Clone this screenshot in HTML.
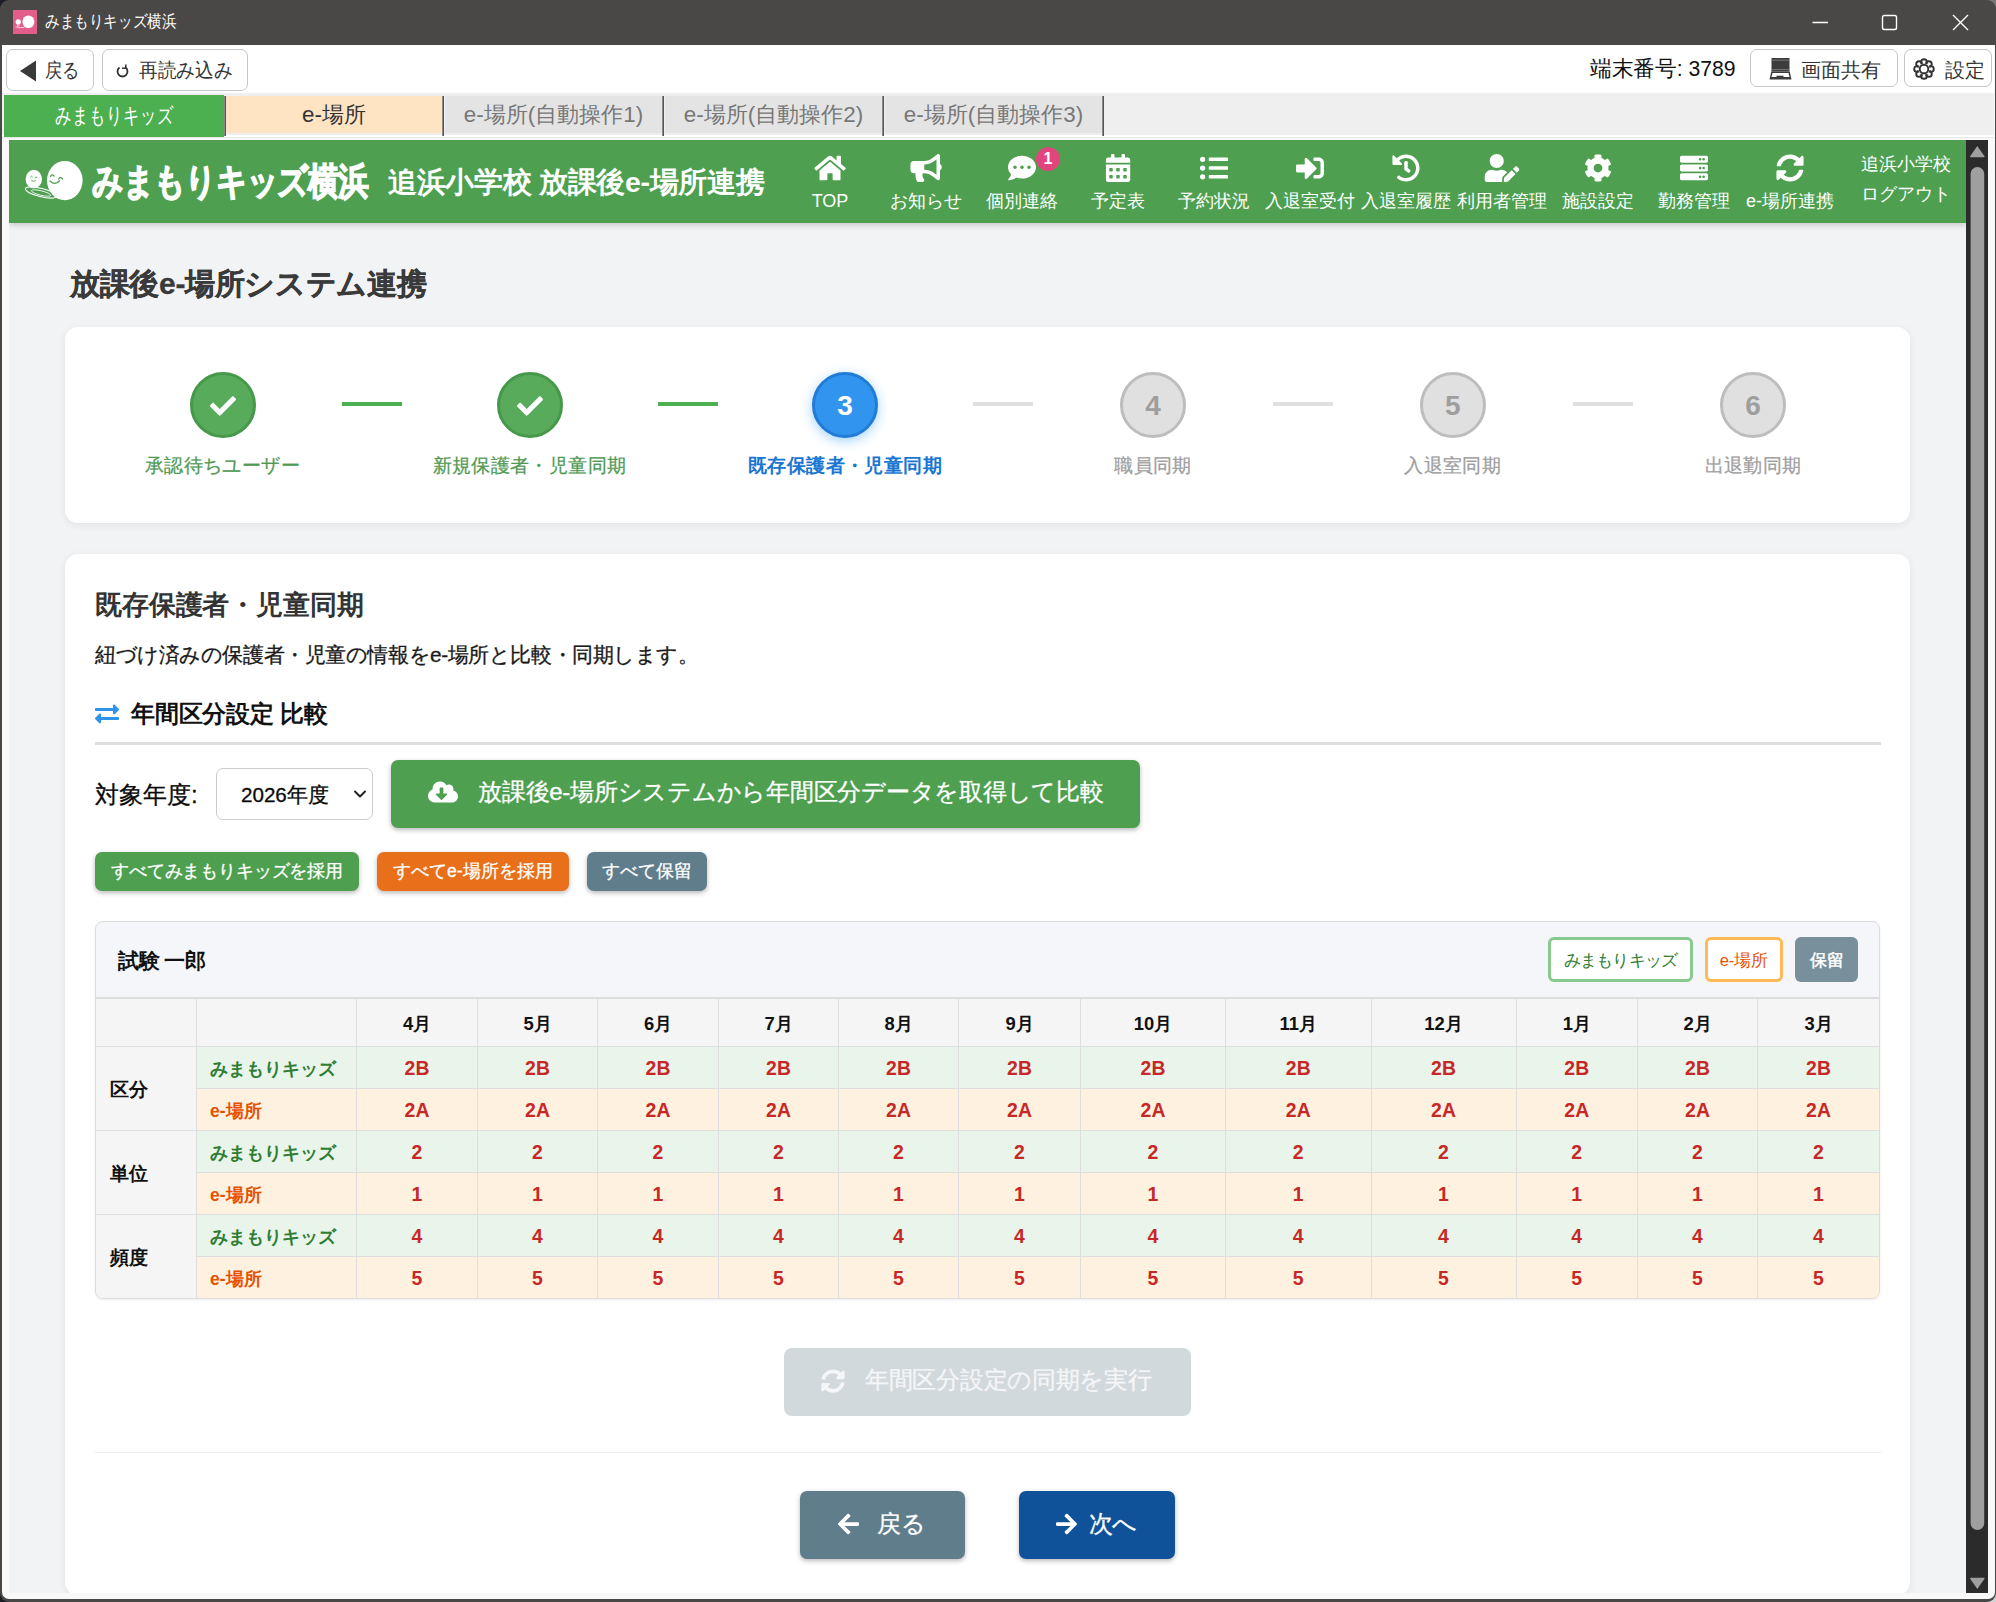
<!DOCTYPE html>
<html lang="ja">
<head>
<meta charset="utf-8">
<title>みまもりキッズ横浜</title>
<style>
*{box-sizing:border-box;margin:0;padding:0}
html,body{width:1996px;height:1602px;overflow:hidden;background:#1c1e26;font-family:"Liberation Sans",sans-serif;}
.abs{position:absolute}
.c{display:flex;align-items:center;justify-content:center;white-space:nowrap}
svg{display:block}
#win{position:absolute;left:0;top:0;width:1996px;height:1602px;background:#4a4846;border-radius:9px;overflow:hidden}
#client{position:absolute;left:2px;top:45px;width:1992.6px;height:1554px;background:#f9f9f9;border-radius:0 0 7px 7px;overflow:hidden}
#cl{position:absolute;left:-2px;top:-45px;width:1996px;height:1602px}
/* title bar */
#ticon{left:13px;top:10px;width:24px;height:24px;background:#e35d8a}
#ttext{left:45px;top:0;height:45px;line-height:44px;color:#fff;font-size:17px;white-space:nowrap;transform:scaleX(.86);transform-origin:0 50%}
/* toolbar */
#toolbar{left:2px;top:45px;width:1992px;height:48px;background:#fff}
.tbtn{position:absolute;border:1px solid #c6c6c6;border-radius:7px;background:#fff}
.tx{height:30px;line-height:30px;color:#333;white-space:nowrap;transform-origin:0 50%}
#tabstrip{left:2px;top:93px;width:1992px;height:42px;background:#efefef}
.tab{position:absolute;top:96px;height:37px;font-size:22.400px;color:#777;background:#e4e4e4}
.sep{position:absolute;top:96px;width:2px;height:39.600px;background:linear-gradient(90deg,#8a8a8a 0,#8a8a8a 40%,#555 40%)}
/* web view */
#web{left:9px;top:140px;width:1957px;height:1453px;background:#f2f3f5;overflow:hidden}
#pg{position:absolute;left:-9px;top:-140px;width:1996px;height:1602px}
#sbar{left:1966px;top:140px;width:22px;height:1453px;background:#2b2b2b}
</style>
</head>
<body>
<div class="abs" style="right:0;top:0;width:20px;height:20px;background:#787878"></div>
<div class="abs" style="right:0;bottom:0;width:20px;height:20px;background:#d2d2d2"></div>
<div id="win">
  <div id="ticon" class="abs"><svg width="24" height="24" viewBox="0 0 24 24" fill="#fff"><ellipse cx="15.400" cy="11.800" rx="6" ry="6.300"/><ellipse cx="5.200" cy="12" rx="2.600" ry="2.800"/><path d="M4.500 15v1.500M6 15v1.500" stroke="#fff" stroke-width=".7"/><path d="M2.500 16.800q5 1.600 9 .5" stroke="#fff" stroke-width=".7" fill="none"/></svg></div>
  <div id="ttext" class="abs">みまもりキッズ横浜</div>
  <!-- window controls -->
  <svg class="abs" style="left:1800px;top:0" width="196" height="45" viewBox="0 0 196 45" fill="none" stroke="#fff" stroke-width="1.4">
    <path d="M12.5 22.5H28"/>
    <rect x="82.5" y="15.5" width="14" height="14" rx="1.8"/>
    <path d="M153 15L168 30M168 15L153 30"/>
  </svg>
  <div id="client"><div id="cl">
    <div id="toolbar" class="abs"></div>
    <div class="tbtn" style="left:6px;top:49px;width:88px;height:42px"></div>
    <svg class="abs" style="left:19px;top:60px" width="18" height="22" viewBox="0 0 18 22"><path d="M17 0.500V21.500L1 11Z" fill="#3a3a3a"/></svg>
    <div class="abs tx" style="left:45px;top:55px;font-size:20px;transform:scaleX(.86)">戻る</div>
    <div class="tbtn" style="left:102px;top:49px;width:146px;height:42px"></div>
    <svg class="abs" style="left:115px;top:64px" width="15" height="15" viewBox="0 0 15 15" fill="none" stroke="#333" stroke-width="1.800"><path d="M4.500 3.500 A5 5 0 1 0 10.500 3.500"/><path d="M10.800 0.500V4.200H7" stroke-width="1.500"/></svg>
    <div class="abs tx" style="left:139px;top:55px;font-size:20px;transform:scaleX(.935)">再読み込み</div>
    <div class="abs tx" style="left:1590px;top:54px;font-size:21.500px;color:#111;transform:scaleX(.985)">端末番号: 3789</div>
    <div class="tbtn" style="left:1750px;top:49px;width:148px;height:38px"></div>
    <svg class="abs" style="left:1768px;top:57px" width="24" height="23" viewBox="0 0 24 23"><path d="M3.500 1H21.500V14.500H3.500Z" fill="#3c3c3c"/><path d="M3.500 3.200H21.500M3.500 12.600H21.500" stroke="#888" stroke-width=".8"/><path d="M3.300 14.500H21.700L23.500 22.500H1.500Z" fill="#3c3c3c"/><path d="M4.500 16H20.500L21.500 20H3.500Z" fill="#fff"/><rect x="8.500" y="18.700" width="7" height="1.300" fill="#3c3c3c"/></svg>
    <div class="abs tx" style="left:1801px;top:55px;font-size:19.600px">画面共有</div>
    <div class="tbtn" style="left:1904px;top:49px;width:88px;height:38px"></div>
    <svg class="abs" style="left:1912px;top:57px" width="24" height="24" viewBox="-12 -12 24 24" fill="none" stroke="#333" stroke-width="1.900"><circle r="3.600"/><g><circle cx="0" cy="-6.900" r="2.900"/><circle cx="4.880" cy="-4.880" r="2.900"/><circle cx="6.900" cy="0" r="2.900"/><circle cx="4.880" cy="4.880" r="2.900"/><circle cx="0" cy="6.900" r="2.900"/><circle cx="-4.880" cy="4.880" r="2.900"/><circle cx="-6.900" cy="0" r="2.900"/><circle cx="-4.880" cy="-4.880" r="2.900"/></g><circle r="5.600" fill="#fff" stroke="none"/><circle r="4.300"/></svg>
    <div class="abs tx" style="left:1945px;top:55px;font-size:19.600px">設定</div>
    <div id="tabstrip" class="abs"></div>
    <div class="abs" style="left:2px;top:135px;width:1992px;height:1.500px;background:#fff"></div>
    <div class="abs" style="left:2px;top:136.500px;width:1992px;height:1px;background:#e6e6e6"></div>
    <div class="tab c" style="left:4px;top:95px;width:220px;height:41.600px;background:#4caf50;color:#fff"><span style="display:inline-block;transform:scaleX(.74)">みまもりキッズ</span></div>
    <div class="tab c" style="left:226px;width:216px;background:#ffe4c4;color:#333">e-場所</div>
    <div class="tab c" style="left:445px;width:217px">e-場所(自動操作1)</div>
    <div class="tab c" style="left:665px;width:217px">e-場所(自動操作2)</div>
    <div class="tab c" style="left:885px;width:217px">e-場所(自動操作3)</div>
    <div class="sep" style="left:224px"></div><div class="sep" style="left:442px"></div><div class="sep" style="left:662px"></div><div class="sep" style="left:882px"></div><div class="sep" style="left:1102px"></div>
    <div id="web" class="abs"><div id="pg">
<style>
#hdr{left:9px;top:140px;width:1957px;height:82.500px;background:#4e9f50;box-shadow:0 2px 6px rgba(0,0,0,.18)}
.nav{position:absolute;top:140px;width:96px;height:82px;color:#fff}
.nav svg{position:absolute;top:13.700px;left:50%;height:28px;fill:#fff;transform:translateX(-50%)}
.nav .lb{position:absolute;left:-10px;right:-10px;top:49px;height:24px;line-height:24px;font-size:18px;text-align:center;white-space:nowrap}
#logo{left:92px;top:158px;height:46px;line-height:46px;font-size:30.500px;letter-spacing:-1.1px;font-weight:bold;color:#fff;white-space:nowrap;-webkit-text-stroke:1.100px #fff;transform:scaleY(1.2);transform-origin:0 50%}
#school{left:388px;top:160px;height:46px;line-height:45px;font-size:28.500px;letter-spacing:-.33px;font-weight:bold;color:#fff;white-space:nowrap}
</style>
<div id="hdr" class="abs"></div>
<svg class="abs" style="left:20px;top:156px" width="70" height="50" viewBox="20 156 70 50">
  <ellipse cx="64.800" cy="180.600" rx="17.800" ry="19.600" fill="#fff"/>
  <ellipse cx="33.800" cy="179" rx="8.200" ry="9.200" fill="#fff"/>
  <ellipse cx="41" cy="192.500" rx="16" ry="4.200" transform="rotate(14 41 192.500)" fill="none" stroke="#fff" stroke-width="1.100"/>
  <ellipse cx="41" cy="193" rx="10" ry="2.200" transform="rotate(14 41 193)" fill="none" stroke="#fff" stroke-width=".8"/>
  <path d="M50.500 176.500 q1.500 -3 3.500 -.5 M50 181 q5 5 9.500 -.2 M58.500 179 q2 -3 4 0" stroke="#4e9f50" stroke-width="1.300" fill="none" stroke-linecap="round"/>
  <path d="M30.500 176.800 q1 -1.500 2 0 M35 177.500 q1 -1.500 2 0 M31.500 180.500 q2 1.800 4 .3" stroke="#4e9f50" stroke-width=".9" fill="none" stroke-linecap="round"/>
</svg>
<div id="logo" class="abs">みまもりキッズ横浜</div>
<div id="school" class="abs">追浜小学校 放課後e-場所連携</div>

<div class="nav" style="left:782px"><svg viewBox="0 0 576 512"><path d="M280.37 148.26L96 300.11V464a16 16 0 0 0 16 16l112.06-.29a16 16 0 0 0 15.920-16V368a16 16 0 0 1 16-16h64a16 16 0 0 1 16 16v95.640a16 16 0 0 0 16 16.050L464 480a16 16 0 0 0 16-16V300L295.670 148.260a12.190 12.190 0 0 0-15.300 0zM571.600 251.470L488 182.560V44.050a12 12 0 0 0-12-12h-56a12 12 0 0 0-12 12v72.610L318.470 43a48 48 0 0 0-61 0L4.340 251.470a12 12 0 0 0-1.600 16.900l25.500 31A12 12 0 0 0 45.150 301l235.220-193.740a12.190 12.190 0 0 1 15.300 0L530.900 301a12 12 0 0 0 16.900-1.600l25.500-31a12 12 0 0 0-1.700-16.930z"/></svg><div class="lb">TOP</div></div>
<div class="nav" style="left:878px"><svg viewBox="0 0 576 512"><path d="M576 240c0-23.630-12.950-44.040-32-55.120V32.010C544 23.260 537.020 0 512 0c-7.120 0-14.190 2.380-19.980 7.020l-85.030 68.030C364.280 109.190 310.660 128 256 128H64c-35.350 0-64 28.650-64 64v96c0 35.350 28.650 64 64 64h33.700c-1.390 10.480-2.180 21.140-2.180 32 0 39.770 9.260 77.350 25.560 110.940 5.190 10.690 16.520 17.060 28.400 17.060h74.280c26.050 0 41.690-29.840 25.900-50.560-16.400-21.520-26.150-48.360-26.150-77.440 0-11.110 1.620-21.790 4.410-32H256c54.660 0 108.280 18.810 150.980 52.950l85.030 68.030a32.023 32.023 0 0 0 19.980 7.020c24.920 0 32-22.780 32-32V295.130C563.050 284.040 576 263.630 576 240zm-96 141.420l-33.050-26.440C392.950 311.780 325.120 288 256 288v-96c69.120 0 136.950-23.780 190.950-66.980L480 98.580v282.840z"/></svg><div class="lb">お知らせ</div></div>
<div class="nav" style="left:974px"><svg viewBox="0 0 512 512"><path d="M256 32C114.600 32 0 125.100 0 240c0 49.600 21.400 95 57 130.700C44.500 421.100 2.700 466 2.200 466.500c-2.200 2.300-2.800 5.700-1.500 8.700S4.800 480 8 480c66.300 0 116-31.800 140.600-51.400 32.700 12.300 69 19.400 107.400 19.400 141.400 0 256-93.100 256-208S397.400 32 256 32zM128 272c-17.700 0-32-14.300-32-32s14.300-32 32-32 32 14.300 32 32-14.300 32-32 32zm128 0c-17.700 0-32-14.300-32-32s14.300-32 32-32 32 14.300 32 32-14.300 32-32 32zm128 0c-17.700 0-32-14.300-32-32s14.300-32 32-32 32 14.300 32 32-14.300 32-32 32z"/></svg><div class="abs c" style="left:62px;top:7px;width:24px;height:24px;border-radius:12px;background:#e2457c;font-size:16px;font-weight:bold;color:#fff">1</div><div class="lb">個別連絡</div></div>
<div class="nav" style="left:1070px"><svg viewBox="0 0 448 512"><path d="M0 464c0 26.500 21.500 48 48 48h352c26.500 0 48-21.500 48-48V192H0v272zm320-196c0-6.600 5.400-12 12-12h40c6.600 0 12 5.400 12 12v40c0 6.600-5.400 12-12 12h-40c-6.600 0-12-5.400-12-12v-40zm0 128c0-6.600 5.400-12 12-12h40c6.600 0 12 5.400 12 12v40c0 6.600-5.400 12-12 12h-40c-6.600 0-12-5.400-12-12v-40zM192 268c0-6.600 5.400-12 12-12h40c6.600 0 12 5.400 12 12v40c0 6.600-5.400 12-12 12h-40c-6.600 0-12-5.400-12-12v-40zm0 128c0-6.600 5.400-12 12-12h40c6.600 0 12 5.400 12 12v40c0 6.600-5.400 12-12 12h-40c-6.600 0-12-5.400-12-12v-40zM64 268c0-6.600 5.400-12 12-12h40c6.600 0 12 5.400 12 12v40c0 6.600-5.400 12-12 12H76c-6.600 0-12-5.400-12-12v-40zm0 128c0-6.600 5.400-12 12-12h40c6.600 0 12 5.400 12 12v40c0 6.600-5.400 12-12 12H76c-6.600 0-12-5.400-12-12v-40zM400 64h-48V16c0-8.800-7.200-16-16-16h-32c-8.800 0-16 7.200-16 16v48H160V16c0-8.800-7.200-16-16-16h-32c-8.800 0-16 7.200-16 16v48H48C21.500 64 0 85.500 0 112v48h448v-48c0-26.500-21.500-48-48-48z"/></svg><div class="lb">予定表</div></div>
<div class="nav" style="left:1166px"><svg viewBox="0 0 512 512"><path d="M48 48a48 48 0 1 0 48 48 48 48 0 0 0-48-48zm0 160a48 48 0 1 0 48 48 48 48 0 0 0-48-48zm0 160a48 48 0 1 0 48 48 48 48 0 0 0-48-48zm448 16H176a16 16 0 0 0-16 16v32a16 16 0 0 0 16 16h320a16 16 0 0 0 16-16v-32a16 16 0 0 0-16-16zm0-320H176a16 16 0 0 0-16 16v32a16 16 0 0 0 16 16h320a16 16 0 0 0 16-16V80a16 16 0 0 0-16-16zm0 160H176a16 16 0 0 0-16 16v32a16 16 0 0 0 16 16h320a16 16 0 0 0 16-16v-32a16 16 0 0 0-16-16z"/></svg><div class="lb">予約状況</div></div>
<div class="nav" style="left:1262px"><svg viewBox="0 0 512 512"><path d="M416 448h-84c-6.600 0-12-5.400-12-12v-40c0-6.600 5.400-12 12-12h84c17.700 0 32-14.300 32-32V160c0-17.700-14.300-32-32-32h-84c-6.600 0-12-5.400-12-12V76c0-6.600 5.400-12 12-12h84c53 0 96 43 96 96v192c0 53-43 96-96 96zm-47-201L201 79c-15-15-41-4.500-41 17v96H24c-13.300 0-24 10.700-24 24v96c0 13.300 10.700 24 24 24h136v96c0 21.500 26 32 41 17l168-168c9.300-9.400 9.300-24.600 0-34z"/></svg><div class="lb">入退室受付</div></div>
<div class="nav" style="left:1358px"><svg viewBox="0 0 512 512"><path d="M504 255.531c.253 136.640-111.180 248.372-247.820 248.468-59.015.042-113.223-20.530-155.822-54.911-11.077-8.940-11.905-25.541-1.839-35.607l11.267-11.267c8.609-8.609 22.353-9.551 31.891-1.984C173.062 425.135 212.781 440 256 440c101.705 0 184-82.311 184-184 0-101.705-82.311-184-184-184-48.814 0-93.149 18.969-126.068 49.932l50.754 50.754c10.080 10.080 2.941 27.314-11.313 27.314H24c-8.837 0-16-7.163-16-16V38.627c0-14.254 17.234-21.393 27.314-11.314l49.372 49.372C129.209 34.136 189.552 8 256 8c136.810 0 247.747 110.780 248 247.531zm-180.912 78.784l9.823-12.630c8.138-10.463 6.253-25.542-4.210-33.679L288 256.349V152c0-13.255-10.745-24-24-24h-16c-13.255 0-24 10.745-24 24v135.651l65.409 50.874c10.463 8.137 25.541 6.253 33.679-4.210z"/></svg><div class="lb">入退室履歴</div></div>
<div class="nav" style="left:1454px"><svg viewBox="0 0 640 512"><path d="M224 256c70.700 0 128-57.300 128-128S294.700 0 224 0 96 57.300 96 128s57.300 128 128 128zm89.600 32h-16.700c-22.200 10.200-46.900 16-72.900 16s-50.600-5.800-72.900-16h-16.700C60.200 288 0 348.200 0 422.400V464c0 26.500 21.500 48 48 48h274.900c-2.400-6.800-3.400-14-2.600-21.300l6.800-60.900 1.200-11.100 7.900-7.900 77.300-77.300c-24.500-27.700-60-45.500-99.900-45.500zm45.300 145.300l-6.800 61c-1.100 10.200 7.500 18.800 17.600 17.600l60.900-6.800 137.900-137.900-71.700-71.700-137.900 137.800zM633 268.900L595.100 231c-9.300-9.300-24.500-9.300-33.800 0l-37.800 37.800-4.100 4.100 71.800 71.700 41.800-41.800c9.300-9.400 9.300-24.500 0-33.900z"/></svg><div class="lb">利用者管理</div></div>
<div class="nav" style="left:1550px"><svg viewBox="0 0 512 512"><path d="M487.400 315.700l-42.600-24.600c4.300-23.200 4.300-47 0-70.200l42.600-24.600c4.900-2.800 7.100-8.600 5.500-14-11.100-35.600-30-67.800-54.700-94.600-3.800-4.100-10-5.100-14.800-2.300L380.800 110c-17.900-15.400-38.500-27.300-60.800-35.100V25.800c0-5.600-3.900-10.500-9.400-11.700-36.700-8.200-74.300-7.800-109.200 0-5.500 1.200-9.400 6.100-9.400 11.700V75c-22.200 7.900-42.800 19.800-60.800 35.100L88.700 85.500c-4.900-2.800-11-1.900-14.800 2.300-24.700 26.700-43.600 58.900-54.700 94.600-1.700 5.400.6 11.200 5.500 14L67.300 221c-4.300 23.200-4.300 47 0 70.200l-42.600 24.600c-4.900 2.800-7.100 8.600-5.500 14 11.100 35.600 30 67.800 54.700 94.600 3.800 4.100 10 5.100 14.800 2.300l42.600-24.600c17.900 15.400 38.500 27.300 60.800 35.100v49.200c0 5.600 3.900 10.500 9.400 11.700 36.700 8.200 74.300 7.800 109.200 0 5.500-1.200 9.400-6.100 9.400-11.700v-49.200c22.200-7.900 42.800-19.800 60.800-35.100l42.600 24.600c4.900 2.800 11 1.900 14.800-2.300 24.700-26.700 43.600-58.900 54.700-94.600 1.500-5.500-.7-11.300-5.600-14.100zM256 336c-44.100 0-80-35.900-80-80s35.900-80 80-80 80 35.900 80 80-35.900 80-80 80z"/></svg><div class="lb">施設設定</div></div>
<div class="nav" style="left:1646px"><svg viewBox="0 0 512 512"><path d="M480 160H32c-17.673 0-32-14.327-32-32V64c0-17.673 14.327-32 32-32h448c17.673 0 32 14.327 32 32v64c0 17.673-14.327 32-32 32zm-48-88c-13.255 0-24 10.745-24 24s10.745 24 24 24 24-10.745 24-24-10.745-24-24-24zm-64 0c-13.255 0-24 10.745-24 24s10.745 24 24 24 24-10.745 24-24-10.745-24-24-24zm112 248H32c-17.673 0-32-14.327-32-32v-64c0-17.673 14.327-32 32-32h448c17.673 0 32 14.327 32 32v64c0 17.673-14.327 32-32 32zm-48-88c-13.255 0-24 10.745-24 24s10.745 24 24 24 24-10.745 24-24-10.745-24-24-24zm-64 0c-13.255 0-24 10.745-24 24s10.745 24 24 24 24-10.745 24-24-10.745-24-24-24zm112 248H32c-17.673 0-32-14.327-32-32v-64c0-17.673 14.327-32 32-32h448c17.673 0 32 14.327 32 32v64c0 17.673-14.327 32-32 32zm-48-88c-13.255 0-24 10.745-24 24s10.745 24 24 24 24-10.745 24-24-10.745-24-24-24zm-64 0c-13.255 0-24 10.745-24 24s10.745 24 24 24 24-10.745 24-24-10.745-24-24-24z"/></svg><div class="lb">勤務管理</div></div>
<div class="nav" style="left:1742px"><svg viewBox="0 0 512 512"><path d="M370.720 133.280C339.458 104.008 298.888 87.962 255.848 88c-77.458.068-144.328 53.178-162.791 126.850-1.344 5.363-6.122 9.150-11.651 9.150H24.103c-7.498 0-13.194-6.807-11.807-14.176C33.933 94.924 134.813 8 256 8c66.448 0 126.791 26.136 171.315 68.685L463.030 40.970C478.149 25.851 504 36.559 504 57.941V192c0 13.255-10.745 24-24 24H345.941c-21.382 0-32.090-25.851-16.971-40.971l41.750-41.749zM32 296h134.059c21.382 0 32.090 25.851 16.971 40.971l-41.750 41.750c31.262 29.273 71.835 45.319 114.876 45.280 77.418-.070 144.315-53.144 162.787-126.849 1.344-5.363 6.122-9.150 11.651-9.150h57.304c7.498 0 13.194 6.807 11.807 14.176C478.067 417.076 377.187 504 256 504c-66.448 0-126.791-26.136-171.315-68.685L48.970 471.030C33.851 486.149 8 475.441 8 454.059V320c0-13.255 10.745-24 24-24z"/></svg><div class="lb">e-場所連携</div></div>
<div class="abs" style="left:1846px;top:149px;width:120px;height:30px;line-height:30px;text-align:center;color:#fff;font-size:18px;white-space:nowrap">追浜小学校</div>
<div class="abs" style="left:1846px;top:179px;width:120px;height:30px;line-height:30px;text-align:center;color:#fff;font-size:18px;white-space:nowrap">ログアウト</div>
<style>
#ptitle{left:70px;top:262px;height:44px;line-height:44px;font-size:30px;letter-spacing:-.32px;font-weight:bold;color:#3a3a3a;-webkit-text-stroke:.3px;white-space:nowrap}
.card{position:absolute;background:#fff;border-radius:13px;box-shadow:0 2px 8px rgba(0,0,0,.07)}
.stc{position:absolute;top:372px;width:66px;height:66px;border-radius:50%;border:3px solid #bdbdbd;background:#e0e0e0;color:#9e9e9e;font-size:28px;font-weight:bold;margin-left:-33px;padding-top:2px}
.stc.done{background:#57ab5a;border-color:#46984a}
.stc.act{background:#3195ef;border-color:#227bd6;color:#fff;box-shadow:0 3px 12px rgba(33,150,243,.42)}
.stl{position:absolute;top:451px;height:28px;line-height:28px;width:300px;margin-left:-150px;text-align:center;font-size:19.400px;letter-spacing:.4px;color:#9e9e9e;white-space:nowrap;-webkit-text-stroke:.25px}
.stl.done{color:#4f9a52}
.stl.act{color:#1976d2;font-weight:bold;-webkit-text-stroke:0}
.stn{position:absolute;top:402px;height:4px;width:60px;background:#e0e0e0}
.stn.done{background:#4caf50}
</style>
<div id="ptitle" class="abs">放課後e-場所システム連携</div>
<div class="card" style="left:65px;top:327px;width:1845px;height:196px"></div>
<div class="stc done c" style="left:222.500px"><svg width="26" height="26" viewBox="0 0 512 512" fill="#fff"><path d="M173.898 439.404l-166.400-166.400c-9.997-9.997-9.997-26.206 0-36.204l36.203-36.204c9.997-9.998 26.207-9.998 36.204 0L192 312.690 432.095 72.596c9.997-9.997 26.207-9.997 36.204 0l36.203 36.204c9.997 9.997 9.997 26.206 0 36.204l-294.400 294.401c-9.998 9.997-26.207 9.997-36.204-.001z"/></svg></div>
<div class="stc done c" style="left:529.500px"><svg width="26" height="26" viewBox="0 0 512 512" fill="#fff"><path d="M173.898 439.404l-166.400-166.400c-9.997-9.997-9.997-26.206 0-36.204l36.203-36.204c9.997-9.998 26.207-9.998 36.204 0L192 312.690 432.095 72.596c9.997-9.997 26.207-9.997 36.204 0l36.203 36.204c9.997 9.997 9.997 26.206 0 36.204l-294.400 294.401c-9.998 9.997-26.207 9.997-36.204-.001z"/></svg></div>
<div class="stc act c" style="left:845px">3</div>
<div class="stc c" style="left:1153px">4</div>
<div class="stc c" style="left:1452.800px">5</div>
<div class="stc c" style="left:1753px">6</div>
<div class="stn done" style="left:342px"></div>
<div class="stn done" style="left:657.500px"></div>
<div class="stn" style="left:972.500px"></div>
<div class="stn" style="left:1272.800px"></div>
<div class="stn" style="left:1573px"></div>
<div class="stl done" style="left:222.500px">承認待ちユーザー</div>
<div class="stl done" style="left:529.500px">新規保護者・児童同期</div>
<div class="stl act" style="left:845px">既存保護者・児童同期</div>
<div class="stl" style="left:1153px">職員同期</div>
<div class="stl" style="left:1452.800px">入退室同期</div>
<div class="stl" style="left:1753px">出退勤同期</div>
<style>
.t{position:absolute;white-space:nowrap}
.btn{position:absolute;border-radius:7px;color:#fff;box-shadow:0 2px 5px rgba(0,0,0,.28);-webkit-text-stroke:.3px}
.rg{-webkit-text-stroke:.3px}
</style>
<div class="card" style="left:65px;top:554px;width:1845px;height:1041px"></div>
<div class="t" style="left:95px;top:585px;height:40px;line-height:40px;font-size:26.800px;letter-spacing:-.15px;font-weight:bold;color:#333">既存保護者・児童同期</div>
<div class="t rg" style="left:95px;top:640px;height:30px;line-height:30px;font-size:20.800px;letter-spacing:-.43px;color:#1a1a1a">紐づけ済みの保護者・児童の情報をe-場所と比較・同期します。</div>
<svg class="abs" style="left:95px;top:702px" width="24" height="24" viewBox="0 0 512 512" fill="#2f93ea"><path d="M0 168v-16c0-13.255 10.745-24 24-24h360V80c0-21.367 25.899-32.042 40.971-16.971l80 80c9.372 9.373 9.372 24.569 0 33.941l-80 80C409.956 271.982 384 261.456 384 240v-48H24c-13.255 0-24-10.745-24-24zm488 152H128v-48c0-21.314-25.862-32.080-40.971-16.971l-80 80c-9.372 9.373-9.372 24.569 0 33.941l80 80C102.057 463.997 128 453.437 128 432v-48h360c13.255 0 24-10.745 24-24v-16c0-13.255-10.745-24-24-24z"/></svg>
<div class="t" style="left:131px;top:696px;height:36px;line-height:36px;font-size:24px;letter-spacing:-.25px;font-weight:bold;color:#111">年間区分設定 比較</div>
<div class="abs" style="left:95px;top:742px;width:1786px;height:3px;background:#dedede"></div>
<div class="t rg" style="left:95px;top:777px;height:36px;line-height:36px;font-size:24px;color:#0a0a0a">対象年度:</div>
<div class="abs" style="left:216px;top:768px;width:157px;height:51.500px;border:1px solid #ccc;border-radius:7px;background:#fff"></div>
<div class="t rg" style="left:241px;top:780px;height:30px;line-height:30px;font-size:20.600px;color:#0a0a0a">2026年度</div>
<svg class="abs" style="left:353px;top:788px" width="14" height="12" viewBox="0 0 14 12" fill="none" stroke="#222" stroke-width="2" stroke-linecap="round" stroke-linejoin="round"><path d="M2 3.500L7 8.500L12 3.500"/></svg>
<div class="btn" style="left:391px;top:760px;width:749px;height:68px;background:#4e9f50"></div>
<svg class="abs" style="left:428px;top:780px" width="30" height="24" viewBox="0 0 640 512" fill="#fff"><path d="M537.600 226.600c4.100-10.700 6.400-22.400 6.400-34.600 0-53-43-96-96-96-19.700 0-38.100 6-53.300 16.200C367 64.200 315.300 32 256 32c-88.400 0-160 71.600-160 160 0 2.700.1 5.400.2 8.100C40.200 219.800 0 273.200 0 336c0 79.500 64.500 144 144 144h368c70.700 0 128-57.300 128-128 0-61.900-44-113.600-102.400-125.400zm-132.900 88.700L299.300 420.700c-6.200 6.200-16.400 6.200-22.600 0L171.300 315.300c-10.100-10.100-2.900-27.300 11.300-27.300H248V176c0-8.800 7.200-16 16-16h48c8.800 0 16 7.200 16 16v112h65.400c14.200 0 21.400 17.200 11.300 27.300z"/></svg>
<div class="t rg" style="left:478px;top:774px;height:36px;line-height:36px;font-size:24px;letter-spacing:-.25px;color:#fff">放課後e-場所システムから年間区分データを取得して比較</div>
<div class="btn c" style="left:95px;top:852px;width:264px;height:38.500px;background:#4e9f50;font-size:17.500px;letter-spacing:-.15px">すべてみまもりキッズを採用</div>
<div class="btn c" style="left:377px;top:852px;width:191.500px;height:38.500px;background:#e8701a;font-size:17.500px">すべてe-場所を採用</div>
<div class="btn c" style="left:586.500px;top:852px;width:120px;height:38.500px;background:#607d8b;font-size:17.500px">すべて保留</div>
<style>
#tbox{left:95px;top:921px;width:1785px;height:378px;border:1px solid #dcdcdc;border-radius:8px;background:#f5f6fa;box-shadow:0 1px 3px rgba(0,0,0,.08);overflow:hidden}
#tb{position:absolute;left:-96px;top:-922px;width:1996px;height:1602px}
.cl{position:absolute;transform:translate(1px,1px);padding-top:2px;display:flex;align-items:center;justify-content:center;white-space:nowrap;border-right:1px solid #dedede;border-bottom:1px solid #dedede;font-weight:bold}
.hd{background:#f5f5f5;color:#111;font-size:18.400px}
.g{background:#e9f4ea}
.o{background:#fef1e0}
.v{color:#c62828;font-size:19.400px}
.lg{color:#2e7d32;font-size:17.500px;justify-content:flex-start;padding-left:13px}
.lo{color:#e65100;font-size:17.500px;justify-content:flex-start;padding-left:13px}
.rl{background:#f5f5f5;color:#111;font-size:19.400px;justify-content:flex-start;padding-left:14px}
.ob{position:absolute;top:937px;height:45px;border-radius:6px;font-size:16.500px}
</style>
<div id="tbox" class="abs"><div id="tb">
<div class="t" style="left:118px;top:943px;height:36px;line-height:36px;font-size:20.600px;letter-spacing:-.5px;font-weight:bold;color:#111">試験 一郎</div>
<div class="ob c" style="left:1548px;width:145px;border:3px solid #89c98d;background:#fff;color:#2e7d32;letter-spacing:-.8px;padding-top:2px">みまもりキッズ</div>
<div class="ob c" style="left:1705px;width:78px;border:3px solid #ffba57;background:#fff;color:#e65100;padding-top:2px">e-場所</div>
<div class="ob c" style="left:1795px;width:63px;background:#78909c;color:#fff;-webkit-text-stroke:.5px;padding-top:2px">保留</div>
<div class="abs" style="left:95px;top:996.600px;width:1786px;height:2px;background:#dcdcdc"></div>
<div class="cl hd" style="left:95px;top:998px;width:101px;height:48px"></div>
<div class="cl hd" style="left:196px;top:998px;width:160px;height:48px"></div>
<div class="cl hd" style="left:356px;top:998px;width:121px;height:48px">4月</div>
<div class="cl hd" style="left:477px;top:998px;width:120px;height:48px">5月</div>
<div class="cl hd" style="left:597px;top:998px;width:121px;height:48px">6月</div>
<div class="cl hd" style="left:718px;top:998px;width:120px;height:48px">7月</div>
<div class="cl hd" style="left:838px;top:998px;width:120px;height:48px">8月</div>
<div class="cl hd" style="left:958px;top:998px;width:122px;height:48px">9月</div>
<div class="cl hd" style="left:1080px;top:998px;width:145px;height:48px">10月</div>
<div class="cl hd" style="left:1225px;top:998px;width:145.5px;height:48px">11月</div>
<div class="cl hd" style="left:1370.5px;top:998px;width:145px;height:48px">12月</div>
<div class="cl hd" style="left:1515.5px;top:998px;width:121.5px;height:48px">1月</div>
<div class="cl hd" style="left:1637px;top:998px;width:120px;height:48px">2月</div>
<div class="cl hd" style="left:1757px;top:998px;width:122px;height:48px">3月</div>
<div class="cl rl" style="left:95px;top:1046px;width:101px;height:84px">区分</div>
<div class="cl g lg" style="left:196px;top:1046px;width:160px;height:42px">みまもりキッズ</div>
<div class="cl o lo" style="left:196px;top:1088px;width:160px;height:42px">e-場所</div>
<div class="cl g v" style="left:356px;top:1046px;width:121px;height:42px">2B</div>
<div class="cl o v" style="left:356px;top:1088px;width:121px;height:42px">2A</div>
<div class="cl g v" style="left:477px;top:1046px;width:120px;height:42px">2B</div>
<div class="cl o v" style="left:477px;top:1088px;width:120px;height:42px">2A</div>
<div class="cl g v" style="left:597px;top:1046px;width:121px;height:42px">2B</div>
<div class="cl o v" style="left:597px;top:1088px;width:121px;height:42px">2A</div>
<div class="cl g v" style="left:718px;top:1046px;width:120px;height:42px">2B</div>
<div class="cl o v" style="left:718px;top:1088px;width:120px;height:42px">2A</div>
<div class="cl g v" style="left:838px;top:1046px;width:120px;height:42px">2B</div>
<div class="cl o v" style="left:838px;top:1088px;width:120px;height:42px">2A</div>
<div class="cl g v" style="left:958px;top:1046px;width:122px;height:42px">2B</div>
<div class="cl o v" style="left:958px;top:1088px;width:122px;height:42px">2A</div>
<div class="cl g v" style="left:1080px;top:1046px;width:145px;height:42px">2B</div>
<div class="cl o v" style="left:1080px;top:1088px;width:145px;height:42px">2A</div>
<div class="cl g v" style="left:1225px;top:1046px;width:145.5px;height:42px">2B</div>
<div class="cl o v" style="left:1225px;top:1088px;width:145.5px;height:42px">2A</div>
<div class="cl g v" style="left:1370.5px;top:1046px;width:145px;height:42px">2B</div>
<div class="cl o v" style="left:1370.5px;top:1088px;width:145px;height:42px">2A</div>
<div class="cl g v" style="left:1515.5px;top:1046px;width:121.5px;height:42px">2B</div>
<div class="cl o v" style="left:1515.5px;top:1088px;width:121.5px;height:42px">2A</div>
<div class="cl g v" style="left:1637px;top:1046px;width:120px;height:42px">2B</div>
<div class="cl o v" style="left:1637px;top:1088px;width:120px;height:42px">2A</div>
<div class="cl g v" style="left:1757px;top:1046px;width:122px;height:42px">2B</div>
<div class="cl o v" style="left:1757px;top:1088px;width:122px;height:42px">2A</div>
<div class="cl rl" style="left:95px;top:1130px;width:101px;height:84px">単位</div>
<div class="cl g lg" style="left:196px;top:1130px;width:160px;height:42px">みまもりキッズ</div>
<div class="cl o lo" style="left:196px;top:1172px;width:160px;height:42px">e-場所</div>
<div class="cl g v" style="left:356px;top:1130px;width:121px;height:42px">2</div>
<div class="cl o v" style="left:356px;top:1172px;width:121px;height:42px">1</div>
<div class="cl g v" style="left:477px;top:1130px;width:120px;height:42px">2</div>
<div class="cl o v" style="left:477px;top:1172px;width:120px;height:42px">1</div>
<div class="cl g v" style="left:597px;top:1130px;width:121px;height:42px">2</div>
<div class="cl o v" style="left:597px;top:1172px;width:121px;height:42px">1</div>
<div class="cl g v" style="left:718px;top:1130px;width:120px;height:42px">2</div>
<div class="cl o v" style="left:718px;top:1172px;width:120px;height:42px">1</div>
<div class="cl g v" style="left:838px;top:1130px;width:120px;height:42px">2</div>
<div class="cl o v" style="left:838px;top:1172px;width:120px;height:42px">1</div>
<div class="cl g v" style="left:958px;top:1130px;width:122px;height:42px">2</div>
<div class="cl o v" style="left:958px;top:1172px;width:122px;height:42px">1</div>
<div class="cl g v" style="left:1080px;top:1130px;width:145px;height:42px">2</div>
<div class="cl o v" style="left:1080px;top:1172px;width:145px;height:42px">1</div>
<div class="cl g v" style="left:1225px;top:1130px;width:145.5px;height:42px">2</div>
<div class="cl o v" style="left:1225px;top:1172px;width:145.5px;height:42px">1</div>
<div class="cl g v" style="left:1370.5px;top:1130px;width:145px;height:42px">2</div>
<div class="cl o v" style="left:1370.5px;top:1172px;width:145px;height:42px">1</div>
<div class="cl g v" style="left:1515.5px;top:1130px;width:121.5px;height:42px">2</div>
<div class="cl o v" style="left:1515.5px;top:1172px;width:121.5px;height:42px">1</div>
<div class="cl g v" style="left:1637px;top:1130px;width:120px;height:42px">2</div>
<div class="cl o v" style="left:1637px;top:1172px;width:120px;height:42px">1</div>
<div class="cl g v" style="left:1757px;top:1130px;width:122px;height:42px">2</div>
<div class="cl o v" style="left:1757px;top:1172px;width:122px;height:42px">1</div>
<div class="cl rl" style="left:95px;top:1214px;width:101px;height:84.5px">頻度</div>
<div class="cl g lg" style="left:196px;top:1214px;width:160px;height:42px">みまもりキッズ</div>
<div class="cl o lo" style="left:196px;top:1256px;width:160px;height:42.5px">e-場所</div>
<div class="cl g v" style="left:356px;top:1214px;width:121px;height:42px">4</div>
<div class="cl o v" style="left:356px;top:1256px;width:121px;height:42.5px">5</div>
<div class="cl g v" style="left:477px;top:1214px;width:120px;height:42px">4</div>
<div class="cl o v" style="left:477px;top:1256px;width:120px;height:42.5px">5</div>
<div class="cl g v" style="left:597px;top:1214px;width:121px;height:42px">4</div>
<div class="cl o v" style="left:597px;top:1256px;width:121px;height:42.5px">5</div>
<div class="cl g v" style="left:718px;top:1214px;width:120px;height:42px">4</div>
<div class="cl o v" style="left:718px;top:1256px;width:120px;height:42.5px">5</div>
<div class="cl g v" style="left:838px;top:1214px;width:120px;height:42px">4</div>
<div class="cl o v" style="left:838px;top:1256px;width:120px;height:42.5px">5</div>
<div class="cl g v" style="left:958px;top:1214px;width:122px;height:42px">4</div>
<div class="cl o v" style="left:958px;top:1256px;width:122px;height:42.5px">5</div>
<div class="cl g v" style="left:1080px;top:1214px;width:145px;height:42px">4</div>
<div class="cl o v" style="left:1080px;top:1256px;width:145px;height:42.5px">5</div>
<div class="cl g v" style="left:1225px;top:1214px;width:145.5px;height:42px">4</div>
<div class="cl o v" style="left:1225px;top:1256px;width:145.5px;height:42.5px">5</div>
<div class="cl g v" style="left:1370.5px;top:1214px;width:145px;height:42px">4</div>
<div class="cl o v" style="left:1370.5px;top:1256px;width:145px;height:42.5px">5</div>
<div class="cl g v" style="left:1515.5px;top:1214px;width:121.5px;height:42px">4</div>
<div class="cl o v" style="left:1515.5px;top:1256px;width:121.5px;height:42.5px">5</div>
<div class="cl g v" style="left:1637px;top:1214px;width:120px;height:42px">4</div>
<div class="cl o v" style="left:1637px;top:1256px;width:120px;height:42.5px">5</div>
<div class="cl g v" style="left:1757px;top:1214px;width:122px;height:42px">4</div>
<div class="cl o v" style="left:1757px;top:1256px;width:122px;height:42.5px">5</div>
</div></div>
<div class="abs" style="left:784px;top:1348px;width:407px;height:68px;border-radius:8px;background:#d2d9dd"></div>
<svg class="abs" style="left:821px;top:1369px" width="24" height="24" viewBox="0 0 512 512" fill="#f4f6f7"><path d="M370.720 133.280C339.458 104.008 298.888 87.962 255.848 88c-77.458.068-144.328 53.178-162.791 126.850-1.344 5.363-6.122 9.150-11.651 9.150H24.103c-7.498 0-13.194-6.807-11.807-14.176C33.933 94.924 134.813 8 256 8c66.448 0 126.791 26.136 171.315 68.685L463.030 40.970C478.149 25.851 504 36.559 504 57.941V192c0 13.255-10.745 24-24 24H345.941c-21.382 0-32.090-25.851-16.971-40.971l41.750-41.749zM32 296h134.059c21.382 0 32.090 25.851 16.971 40.971l-41.750 41.750c31.262 29.273 71.835 45.319 114.876 45.280 77.418-.070 144.315-53.144 162.787-126.849 1.344-5.363 6.122-9.150 11.651-9.150h57.304c7.498 0 13.194 6.807 11.807 14.176C478.067 417.076 377.187 504 256 504c-66.448 0-126.791-26.136-171.315-68.685L48.970 471.030C33.851 486.149 8 475.441 8 454.059V320c0-13.255 10.745-24 24-24z"/></svg>
<div class="t rg" style="left:865px;top:1362px;height:36px;line-height:36px;font-size:24px;letter-spacing:-.3px;color:#f4f6f7">年間区分設定の同期を実行</div>
<div class="abs" style="left:95px;top:1451.500px;width:1786px;height:1px;background:#ebebeb"></div>
<div class="btn" style="left:800px;top:1491px;width:165px;height:68px;background:#607d8b;border-radius:7px"></div>
<svg class="abs" style="left:838px;top:1512px" width="21" height="24" viewBox="0 0 448 512" fill="#fff"><path d="M257.500 445.100l-22.200 22.200c-9.400 9.400-24.600 9.400-33.900 0L7 273c-9.400-9.400-9.400-24.600 0-33.900L201.400 44.700c9.400-9.400 24.600-9.400 33.900 0l22.200 22.200c9.500 9.500 9.300 25-.4 34.300L136.600 216H424c13.300 0 24 10.700 24 24v32c0 13.300-10.700 24-24 24H136.600l120.500 114.800c9.800 9.300 10 24.800.4 34.300z"/></svg>
<div class="t rg" style="left:877px;top:1506px;height:36px;line-height:36px;font-size:24px;color:#fff">戻る</div>
<div class="btn" style="left:1019px;top:1491px;width:155.500px;height:68px;background:#0f5299;border-radius:7px"></div>
<svg class="abs" style="left:1056px;top:1512px" width="21" height="24" viewBox="0 0 448 512" fill="#fff"><path d="M190.500 66.900l22.200-22.200c9.400-9.400 24.600-9.400 33.900 0L441 239c9.400 9.400 9.400 24.600 0 33.900L246.600 467.300c-9.400 9.400-24.600 9.400-33.900 0l-22.200-22.200c-9.500-9.500-9.300-25 .4-34.300L311.400 296H24c-13.300 0-24-10.700-24-24v-32c0-13.300 10.700-24 24-24h287.400L190.900 101.200c-9.800-9.300-10-24.800-.4-34.300z"/></svg>
<div class="t rg" style="left:1089px;top:1506px;height:36px;line-height:36px;font-size:24px;letter-spacing:-.8px;color:#fff">次へ</div>

    </div></div>
    <div id="sbar" class="abs">
      <svg width="22" height="1453" viewBox="0 0 22 1453">
        <path d="M11.300 6 L18.300 16 Q19 17.300 17.600 17.300 L5 17.300 Q3.600 17.300 4.300 16 Z" fill="#9f9f9f"/>
        <rect x="4.600" y="27" width="13.600" height="1363" rx="6.800" fill="#9f9f9f"/>
        <path d="M11.300 1449 L18.300 1439 Q19 1437.700 17.600 1437.700 L5 1437.700 Q3.600 1437.700 4.300 1439 Z" fill="#9f9f9f"/>
      </svg>
    </div>
  </div></div>
</div>
</body>
</html>
